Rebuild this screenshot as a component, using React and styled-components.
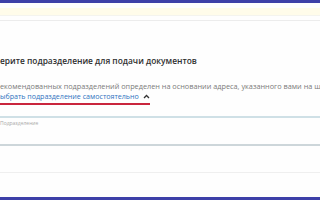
import React from 'react'
import styled, { createGlobalStyle } from 'styled-components'

const GlobalStyle = createGlobalStyle`
  html, body {
    margin: 0;
    padding: 0;
    background: #ffffff;
  }
  body {
    font-family: 'Open Sans', 'Noto Sans', sans-serif;
  }
`

const Page = styled.div`
  width: 320px;
  height: 200px;
  overflow: hidden;
  display: flex;
  flex-direction: column;
  background: #fefefe;
`

const TopBar = styled.div`
  height: 3px;
  background: #3d40a8;
  flex-shrink: 0;
`

const Notice = styled.div`
  margin-top: 5px;
  height: 8px;
  background: #fffcea;
  border-bottom: 1px solid #f4f4ee;
`

const Divider = styled.div`
  margin-top: 4px;
  height: 1px;
  background: #ececec;
`

const Content = styled.section`
  flex: 1;
  display: flex;
  flex-direction: column;
  padding-top: 33px;
`

/* the start of each line sits past the left edge of the window */
const Clipped = styled.span`
  display: inline-block;
  width: 0;
  direction: rtl;
  white-space: nowrap;
`

const Title = styled.div`
  white-space: nowrap;
  font-size: 8.4px;
  font-weight: 600;
  color: #2f2f2f;
  line-height: 13px;
`

const Hint = styled.div`
  white-space: nowrap;
  margin-top: 14px;
  font-size: 7.3px;
  color: #7a7a7a;
  line-height: 10px;
`

const Toggle = styled.div`
  display: inline-flex;
  align-items: center;
  gap: 4px;
  align-self: flex-start;
  padding-bottom: 2px;
  border-bottom: 2px solid #c9253d;
`

const ToggleText = styled.span`
  font-size: 7.1px;
  color: #2f72bf;
  line-height: 10px;
  white-space: nowrap;
`

const Field = styled.div`
  margin-top: ${({ $gap }) => $gap}px;
  height: ${({ $height }) => $height}px;
  border-top: ${({ $line }) => $line};
  display: flex;
  flex-direction: column;
`

const FieldLabel = styled.div`
  padding-top: 2px;
  font-size: 5px;
  color: #a9a9a9;
  white-space: nowrap;
`

const BottomBar = styled.div`
  height: 3px;
  background: #3d40a8;
  flex-shrink: 0;
`

const Chevron = () => (
  <svg width="7" height="5" viewBox="0 0 7 5" fill="none">
    <path d="M1 4 L3.5 1.5 L6 4" stroke="#333" strokeWidth="1.3" />
  </svg>
)

export default function App() {
  return (
    <>
      <GlobalStyle />
      <Page>
        <TopBar />
        <Notice />
        <Divider />
        <Content>
          <Title>
            <Clipped>Выб</Clipped>ерите подразделение для подачи документов
          </Title>
          <Hint>
            <Clipped>Перечень р</Clipped>екомендованных подразделений определен на основании адреса, указанного вами на шаге
          </Hint>
          <Toggle>
            <ToggleText>
              <Clipped>В</Clipped>ыбрать подразделение самостоятельно
            </ToggleText>
            <Chevron />
          </Toggle>
          <Field $gap={11} $height={26} $line="2px solid #cfe0e6">
            <FieldLabel>Подразделение</FieldLabel>
          </Field>
          <Field $gap={0} $height={26} $line="2px solid #cdd6da" />
          <Field $gap={0} $height={24} $line="1px solid #efefef" />
        </Content>
        <BottomBar />
      </Page>
    </>
  )
}
